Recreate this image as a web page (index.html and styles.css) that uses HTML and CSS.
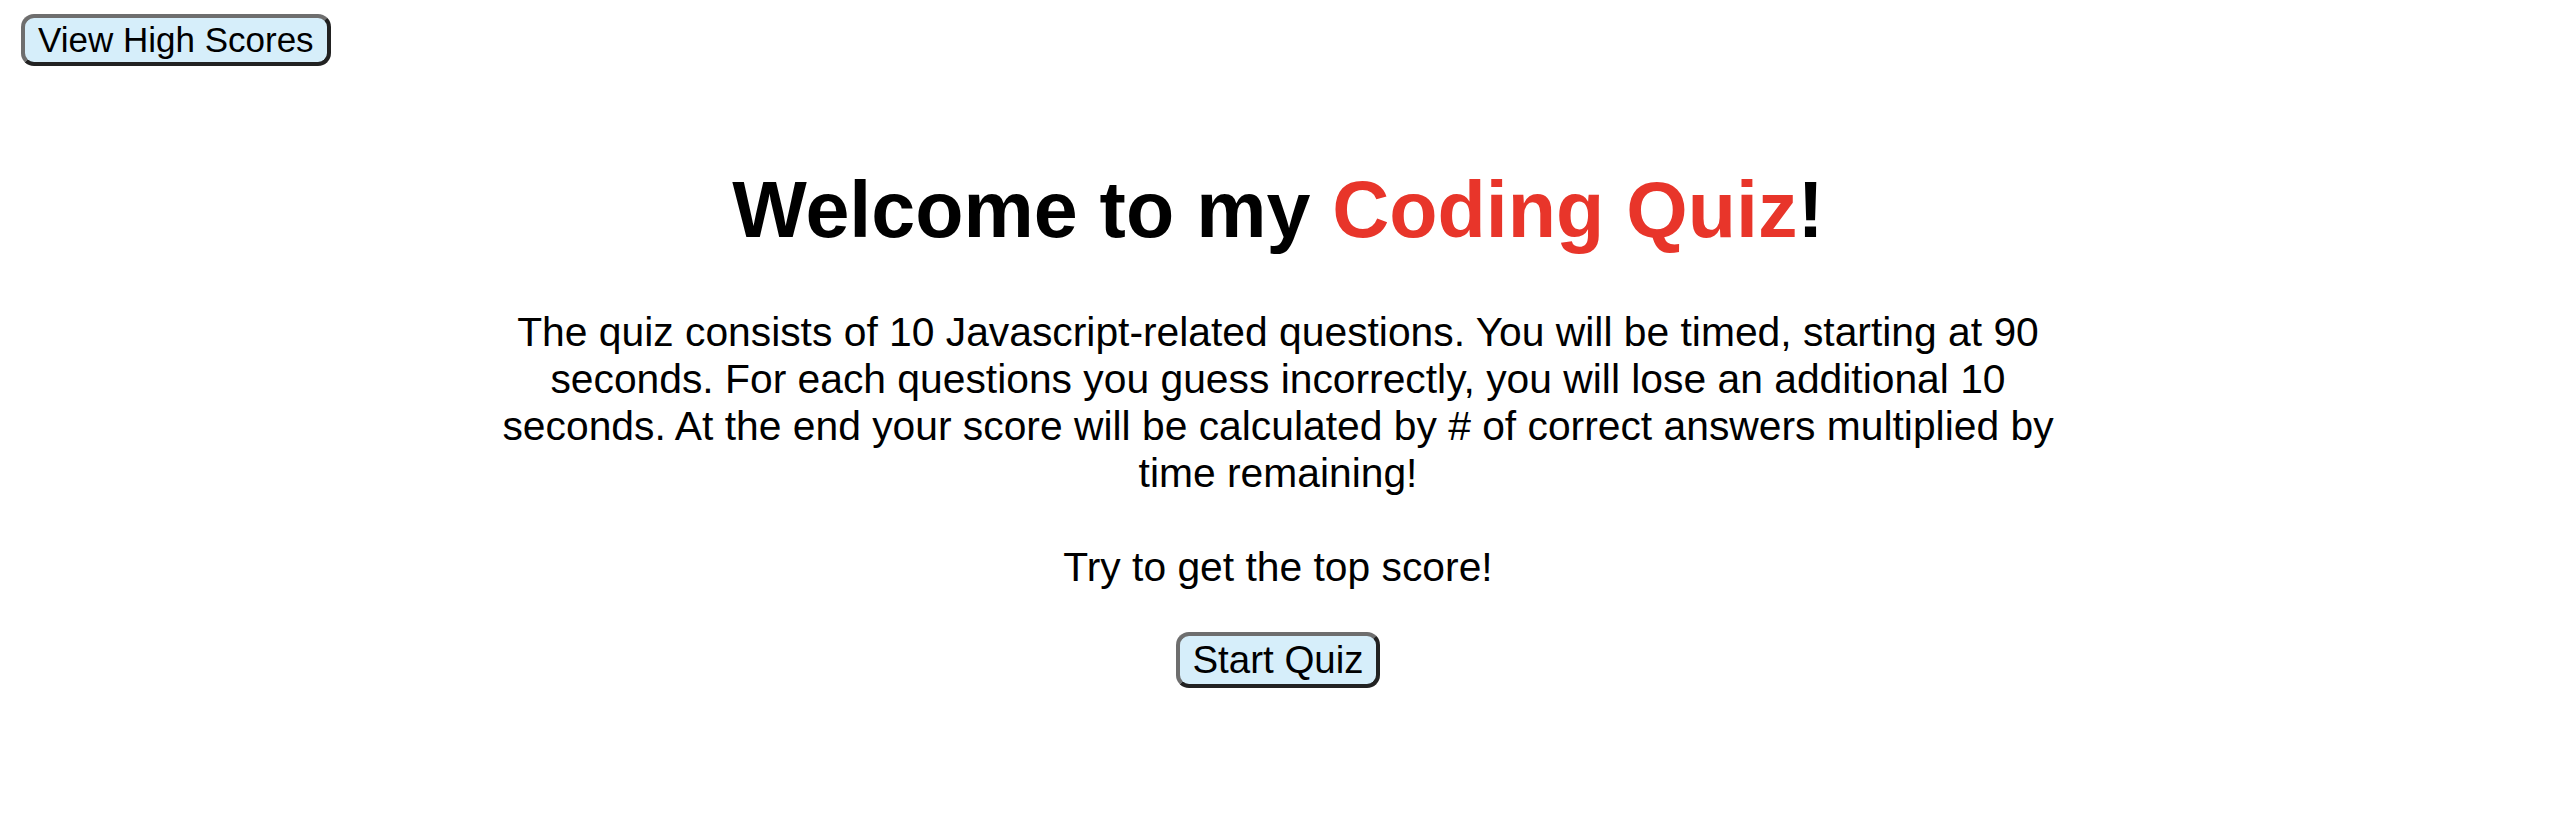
FILE: index.html
```html
<!DOCTYPE html>
<html lang="en">
<head>
<meta charset="utf-8">
<title>Coding Quiz</title>
<link rel="stylesheet" href="styles.css">
</head>
<body>
<header class="top-bar">
  <button class="btn btn-scores" type="button">View High Scores</button>
</header>
<main class="intro">
  <h1 class="title">Welcome to my <span class="accent">Coding Quiz</span>!</h1>
  <p class="description">The quiz consists of 10 Javascript-related questions. You will be timed, starting at 90 seconds. For each questions you guess incorrectly, you will lose an additional 10 seconds. At the end your score will be calculated by # of correct answers multiplied by time remaining!</p>
  <p class="tagline">Try to get the top score!</p>
  <button class="btn btn-start" type="button">Start Quiz</button>
</main>
</body>
</html>
```
FILE: styles.css
```css
html, body {
  margin: 0;
  padding: 0;
  background: #ffffff;
}

body {
  font-family: "Liberation Sans", Arial, Helvetica, sans-serif;
  color: #000000;
}

.top-bar {
  padding: 14px 0 0 21px;
}

.btn {
  font-family: "Liberation Sans", Arial, Helvetica, sans-serif;
  color: #000000;
  background: #d6eefa;
  border-style: solid;
  border-width: 4px;
  border-color: #6e6e6e #222222 #222222 #6e6e6e;
  border-radius: 13px;
  cursor: pointer;
  line-height: normal;
}

.btn-scores {
  font-size: 35px;
  padding: 2px 13px;
}

.intro {
  text-align: center;
}

.title {
  font-size: 79px;
  font-weight: bold;
  margin: 98px 0 53px;
  line-height: normal;
}

.accent {
  color: #e8352a;
}

.description {
  font-size: 40.8px;
  max-width: 1600px;
  margin: 0 auto 46.5px;
  line-height: normal;
}

.tagline {
  font-size: 40.8px;
  margin: 0 0 41px;
  line-height: normal;
}

.btn-start {
  font-size: 38.5px;
  padding: 2px 12px;
}
```
